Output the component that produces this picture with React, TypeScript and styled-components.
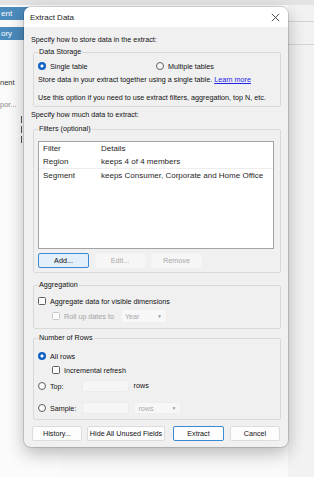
import React from "react";
import styled, { createGlobalStyle, css } from "styled-components";

const GlobalStyle = createGlobalStyle`
  html, body { margin: 0; padding: 0; }
  body {
    font-family: "Liberation Sans", Arial, sans-serif;
    background: #f7f7f7;
    -webkit-font-smoothing: antialiased;
  }
  * { box-sizing: border-box; }
`;

const Screen = styled.div`
  position: relative;
  width: 314px;
  height: 477px;
  overflow: hidden;
  background: #f7f7f7;
`;

/* ---------- background application ---------- */
const Backdrop = styled.div`
  display: flex;
  flex-direction: column;
  height: 100%;
`;

const TopBand = styled.div`
  height: 5px;
  background: #e4e4e4;
`;

const BackRow = styled.div`
  display: flex;
  flex: 1;
`;

const LeftPane = styled.div`
  width: 60px;
  display: flex;
  flex-direction: column;
  padding-top: 2px;
  background: #fbfbfb;
`;

const SideTab = styled.div<{ $mt?: number }>`
  height: 13px;
  margin-top: ${(p) => p.$mt ?? 0}px;
  background: #4b8bbd;
  color: #fff;
  font-size: 8px;
  line-height: 13px;
  padding-left: 1px;
  white-space: nowrap;
`;

const SideItem = styled.div<{ $mt?: number; $muted?: boolean }>`
  margin-top: ${(p) => p.$mt ?? 0}px;
  height: 11px;
  font-size: 7.5px;
  line-height: 11px;
  color: ${(p) => (p.$muted ? "#8a8a8a" : "#333")};
  white-space: nowrap;
`;

const Splitter = styled.div`
  margin: 6px 0 0 21px;
  width: 1px;
  height: 28px;
  background: repeating-linear-gradient(
    to bottom,
    #555 0 7px,
    transparent 7px 10px
  );
`;

const MidPane = styled.div`
  flex: 1;
  background: #fafafa;
`;

const RightPane = styled.div`
  width: 26px;
  background: #f2f2f2;
  display: flex;
  flex-direction: column;
`;

const RightRule = styled.div<{ $mt: number }>`
  margin-top: ${(p) => p.$mt}px;
  height: 1px;
  background: #d4d4d4;
`;

/* ---------- dialog ---------- */
const Dialog = styled.div`
  position: absolute;
  left: 24px;
  top: 7px;
  width: 264px;
  height: 440px;
  border-radius: 7px;
  background: #f0f0f0;
  overflow: hidden;
  box-shadow: 0 0 0 1px rgba(0, 0, 0, 0.13), 0 6px 18px rgba(0, 0, 0, 0.28);
  display: flex;
  flex-direction: column;
  color: #111;
`;

const TitleBar = styled.div`
  height: 20px;
  background: #ffffff;
  display: flex;
  align-items: center;
  justify-content: space-between;
  padding: 0 8px 0 6px;
`;

const Title = styled.div`
  font-size: 8px;
  color: #1a1a1a;
`;

const CloseButton = styled.div`
  width: 9px;
  height: 9px;
  display: flex;
`;

const Body = styled.div`
  flex: 1;
  display: flex;
  flex-direction: column;
  padding: 8px 7px 0 7px;
`;

const Text = styled.div<{ $mt?: number; $ml?: number }>`
  font-size: 7.2px;
  line-height: 10px;
  height: 10px;
  white-space: nowrap;
  margin-top: ${(p) => p.$mt ?? 0}px;
  margin-left: ${(p) => p.$ml ?? 0}px;
  color: #111;
`;

const Link = styled.a`
  color: #2323e6;
  text-decoration: underline;
`;

const Group = styled.fieldset<{ $mt?: number; $pt: number; $pb: number }>`
  margin: ${(p) => p.$mt ?? 0}px 0 0 2px;
  min-width: 0;
  border: 1px solid #d9d9d9;
  border-radius: 2px;
  padding: ${(p) => p.$pt}px 6px ${(p) => p.$pb}px 4px;
  display: flex;
  flex-direction: column;
`;

const Legend = styled.legend`
  padding: 0 1px;
  font-size: 7.2px;
  line-height: 10px;
  color: #111;
`;

const Row = styled.div<{ $mt?: number; $indent?: number; $h?: number }>`
  display: flex;
  align-items: center;
  height: ${(p) => p.$h ?? 10}px;
  margin-top: ${(p) => p.$mt ?? 0}px;
  padding-left: ${(p) => p.$indent ?? 0}px;
  font-size: 7.2px;
  white-space: nowrap;
`;

const TwoCols = styled.div`
  display: grid;
  grid-template-columns: 1fr 1fr;
  height: 10px;
  align-items: center;
`;

const Choice = styled.label<{ $disabled?: boolean }>`
  display: flex;
  align-items: center;
  gap: 4px;
  font-size: 7.2px;
  color: ${(p) => (p.$disabled ? "#a2a2a2" : "#111")};
`;

const RadioDot = styled.span<{ $on?: boolean }>`
  width: 8px;
  height: 8px;
  border-radius: 50%;
  flex: none;
  ${(p) =>
    p.$on
      ? css`
          background: radial-gradient(circle, #ffffff 0 1.3px, #0f62c2 1.8px);
        `
      : css`
          background: #f9f9f9;
          border: 1px solid #606060;
        `}
`;

const CheckBox = styled.span<{ $disabled?: boolean }>`
  width: 8px;
  height: 8px;
  border-radius: 1.5px;
  flex: none;
  background: #fbfbfb;
  border: 1px solid ${(p) => (p.$disabled ? "#c9c9c9" : "#5e5e5e")};
`;

const ListBox = styled.div`
  height: 108px;
  background: #ffffff;
  border: 1px solid #a3a3a3;
  display: flex;
  flex-direction: column;
`;

const ListRow = styled.div<{ $line?: boolean }>`
  display: grid;
  grid-template-columns: 58px 1fr;
  height: ${(p) => (p.$line ? 14 : 13)}px;
  align-items: center;
  padding-left: 4px;
  font-size: 8px;
  white-space: nowrap;
  color: #1f1f1f;
  border-bottom: ${(p) => (p.$line ? "1px solid #ededed" : "none")};
`;

const ButtonRow = styled.div`
  display: flex;
  gap: 5.5px;
  margin-top: 4px;
`;

type Variant = "default" | "focus" | "primary" | "disabled";

const Button = styled.div<{ $variant?: Variant; $w: number; $ml?: number }>`
  width: ${(p) => p.$w}px;
  height: 15px;
  margin-left: ${(p) => p.$ml ?? 0}px;
  border-radius: 2px;
  font-size: 7.2px;
  display: flex;
  align-items: center;
  justify-content: center;
  white-space: nowrap;
  ${(p) => {
    switch (p.$variant) {
      case "focus":
        return css`
          background: #e3effa;
          border: 1px solid #3a8ad6;
          color: #111;
        `;
      case "primary":
        return css`
          background: #fdfdfd;
          border: 1px solid #3a8ad6;
          color: #111;
        `;
      case "disabled":
        return css`
          background: #f6f6f6;
          border: 1px solid #f3f3f3;
          color: #a8a8a8;
        `;
      default:
        return css`
          background: #fdfdfd;
          border: 1px solid #dcdcdc;
          color: #111;
        `;
    }
  }}
`;

const Field = styled.div<{ $w: number; $ml: number }>`
  width: ${(p) => p.$w}px;
  height: 12px;
  margin-left: ${(p) => p.$ml}px;
  background: #f6f6f6;
  border: 1px solid #ececec;
  border-radius: 2px;
`;

const Select = styled.div<{ $w: number; $ml: number; $h?: number }>`
  width: ${(p) => p.$w}px;
  height: ${(p) => p.$h ?? 12}px;
  margin-left: ${(p) => p.$ml}px;
  background: #f7f7f7;
  border: 1px solid #efefef;
  border-radius: 2px;
  display: flex;
  align-items: center;
  justify-content: space-between;
  padding: 0 4px 0 3px;
  font-size: 7.2px;
  color: #a8a8a8;
`;

const Caret = styled.span`
  font-size: 5px;
  color: #9a9a9a;
`;

const Footer = styled.div`
  display: flex;
  margin-top: 6px;
  padding: 0 1px;
  gap: 5px;
`;

function Radio({ on, label, disabled }: { on?: boolean; label: string; disabled?: boolean }) {
  return (
    <Choice $disabled={disabled}>
      <RadioDot $on={on} />
      {label}
    </Choice>
  );
}

function Check({ label, disabled }: { label: string; disabled?: boolean }) {
  return (
    <Choice $disabled={disabled}>
      <CheckBox $disabled={disabled} />
      {label}
    </Choice>
  );
}

export default function App() {
  return (
    <>
      <GlobalStyle />
      <Screen>
        <Backdrop>
          <TopBand />
          <BackRow>
            <LeftPane>
              <SideTab>ent</SideTab>
              <SideTab $mt={7}>ory</SideTab>
              <SideItem $mt={37}>nent</SideItem>
              <SideItem $mt={11} $muted>
                por...
              </SideItem>
              <Splitter />
            </LeftPane>
            <MidPane />
            <RightPane>
              <RightRule $mt={16} />
              <RightRule $mt={22} />
            </RightPane>
          </BackRow>
        </Backdrop>

        <Dialog>
          <TitleBar>
            <Title>Extract Data</Title>
            <CloseButton>
              <svg width="9" height="9" viewBox="0 0 9 9">
                <path d="M0.8 0.8 L8.2 8.2 M8.2 0.8 L0.8 8.2" stroke="#3a3a3a" strokeWidth="0.9" />
              </svg>
            </CloseButton>
          </TitleBar>

          <Body>
            <Text>Specify how to store data in the extract:</Text>

            <Group $mt={2} $pt={4} $pb={3}>
              <Legend>Data Storage</Legend>
              <TwoCols>
                <Radio on label="Single table" />
                <Radio label="Multiple tables" />
              </TwoCols>
              <Text $mt={4}>
                Store data in your extract together using a single table. <Link>Learn more</Link>
              </Text>
              <Text $mt={8}>Use this option if you need to use extract filters, aggregation, top N, etc.</Text>
            </Group>

            <Text $mt={3}>Specify how much data to extract:</Text>

            <Group $mt={4} $pt={7} $pb={4}>
              <Legend>Filters (optional)</Legend>
              <ListBox>
                <ListRow>
                  <span>Filter</span>
                  <span>Details</span>
                </ListRow>
                <ListRow $line>
                  <span>Region</span>
                  <span>keeps 4 of 4 members</span>
                </ListRow>
                <ListRow>
                  <span>Segment</span>
                  <span>keeps Consumer, Corporate and Home Office</span>
                </ListRow>
              </ListBox>
              <ButtonRow>
                <Button $variant="focus" $w={51}>Add...</Button>
                <Button $variant="disabled" $w={51}>Edit...</Button>
                <Button $variant="disabled" $w={51}>Remove</Button>
              </ButtonRow>
            </Group>

            <Group $mt={7} $pt={6} $pb={5}>
              <Legend>Aggregation</Legend>
              <Row>
                <Check label="Aggregate data for visible dimensions" />
              </Row>
              <Row $mt={3} $indent={14} $h={14}>
                <Check disabled label="Roll up dates to" />
                <Select $w={46} $ml={7} $h={14}>
                  Year <Caret>▼</Caret>
                </Select>
              </Row>
            </Group>

            <Group $mt={4} $pt={8} $pb={5}>
              <Legend>Number of Rows</Legend>
              <Row>
                <Radio on label="All rows" />
              </Row>
              <Row $mt={4} $indent={14}>
                <Check label="Incremental refresh" />
              </Row>
              <Row $mt={5} $h={12}>
                <Radio label="Top:" />
                <Field $w={47} $ml={18} />
                <Text $ml={5}>rows</Text>
              </Row>
              <Row $mt={10} $h={12}>
                <Radio label="Sample:" />
                <Field $w={47} $ml={6} />
                <Select $w={47} $ml={5}>
                  rows <Caret>▼</Caret>
                </Select>
              </Row>
            </Group>

            <Footer>
              <Button $w={50}>History...</Button>
              <Button $w={78}>Hide All Unused Fields</Button>
              <Button $variant="primary" $w={51} $ml={3}>Extract</Button>
              <Button $w={50} $ml={1}>Cancel</Button>
            </Footer>
          </Body>
        </Dialog>
      </Screen>
    </>
  );
}
